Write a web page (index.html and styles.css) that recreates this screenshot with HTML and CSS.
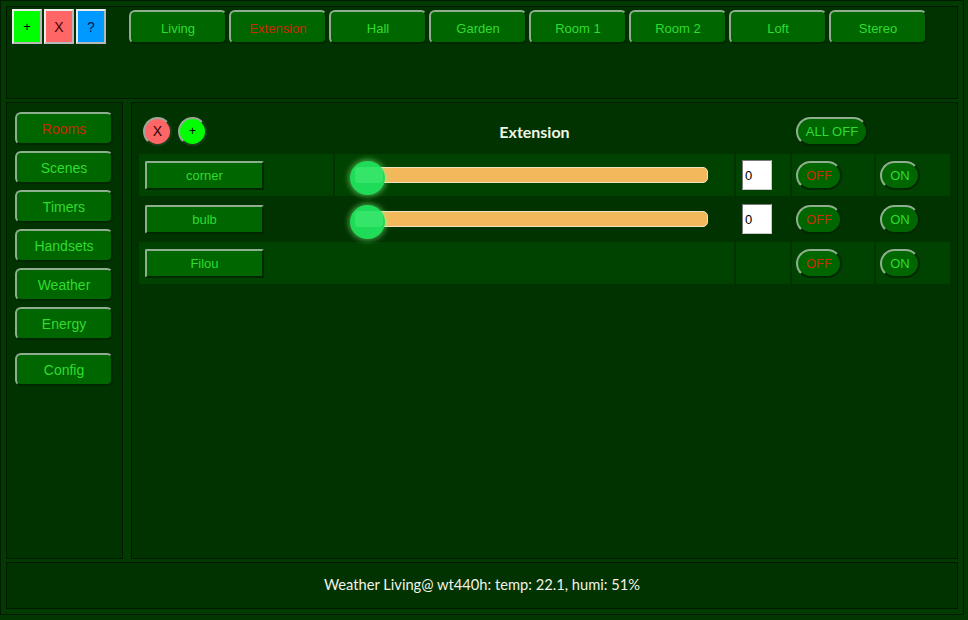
FILE: index.html
```html
<!DOCTYPE html>
<html lang="en">
<head>
<meta charset="utf-8">
<title>Home control</title>
<link rel="stylesheet" href="styles.css">
</head>
<body>
<div class="frame">
  <header class="panel top">
    <div class="tools">
      <button class="sq add">+</button>
      <button class="sq del">X</button>
      <button class="sq help">?</button>
    </div>
    <nav class="tabs">
      <button class="btn tab">Living</button>
      <button class="btn tab active">Extension</button>
      <button class="btn tab">Hall</button>
      <button class="btn tab">Garden</button>
      <button class="btn tab">Room 1</button>
      <button class="btn tab">Room 2</button>
      <button class="btn tab">Loft</button>
      <button class="btn tab">Stereo</button>
    </nav>
  </header>
  <div class="middle">
    <aside class="panel side">
      <button class="btn sbtn active">Rooms</button>
      <button class="btn sbtn">Scenes</button>
      <button class="btn sbtn">Timers</button>
      <button class="btn sbtn">Handsets</button>
      <button class="btn sbtn">Weather</button>
      <button class="btn sbtn">Energy</button>
      <button class="btn sbtn config">Config</button>
    </aside>
    <main class="panel main">
      <div class="rows">
        <div class="row head">
          <div class="cell c1 circles">
            <button class="circ del">X</button>
            <button class="circ add">+</button>
          </div>
          <div class="cell title">Extension</div>
          <div class="cell"></div>
          <div class="cell c4"><button class="btn pill alloff">ALL OFF</button></div>
          <div class="cell"></div>
        </div>
        <div class="row odd">
          <div class="cell c1"><button class="btn name">corner</button></div>
          <div class="cell slider"><div class="track"></div><div class="knob"></div></div>
          <div class="cell c3"><input class="num" type="text" value="0"></div>
          <div class="cell c4"><button class="btn pill off">OFF</button></div>
          <div class="cell c5"><button class="btn pill on">ON</button></div>
        </div>
        <div class="row">
          <div class="cell c1"><button class="btn name">bulb</button></div>
          <div class="cell slider"><div class="track"></div><div class="knob"></div></div>
          <div class="cell c3"><input class="num" type="text" value="0"></div>
          <div class="cell c4"><button class="btn pill off">OFF</button></div>
          <div class="cell c5"><button class="btn pill on">ON</button></div>
        </div>
        <div class="row odd">
          <div class="cell c1 wide"><button class="btn name">Filou</button></div>
          <div class="cell"></div>
          <div class="cell c4"><button class="btn pill off">OFF</button></div>
          <div class="cell c5"><button class="btn pill on">ON</button></div>
        </div>
      </div>
    </main>
  </div>
  <footer class="panel foot">Weather Living@ wt440h: temp: 22.1, humi: 51%</footer>
</div>
</body>
</html>
```
FILE: styles.css
```css
* { box-sizing: border-box; }
html, body { margin: 0; padding: 0; }
body {
  background: #013801;
  width: 968px;
  height: 620px;
  overflow: hidden;
  font-family: "Liberation Sans", Arial, sans-serif;
}
button { font-family: "Liberation Sans", Arial, sans-serif; cursor: pointer; }

.frame {
  width: 964px;
  height: 615px;
  border: 1px solid #001c00;
  background: #023a02;
  padding: 5px;
  display: flex;
  flex-direction: column;
  gap: 3px;
}
.panel {
  border: 1px solid #001a00;
  background: #003300;
}

/* header */
.top {
  height: 93px;
  flex: none;
  padding: 2px 5px;
  display: flex;
  align-items: flex-start;
}
.tools { display: flex; gap: 2px; }
.sq {
  width: 30px;
  height: 35px;
  padding: 0;
  border: 2px solid;
  border-color: #ececec #b8b8b8 #b8b8b8 #ececec;
  font-size: 13px;
  color: #000;
}
.sq.add { background: #00ff00; }
.sq.del { background: #ff6666; color: #4a0000; font-size: 14px; }
.sq.help { background: #0099ff; color: #001850; font-size: 14px; }

.tabs { display: flex; gap: 2px; margin-left: 23px; margin-top: 1px; }

.btn {
  background: #006600;
  color: #2fdc2f;
  border: 2px solid;
  border-color: #8fae8f #012801 #012801 #8fae8f;
  padding: 0;
}
.btn.active { color: #cc2a00; }

.tab {
  width: 98px;
  height: 34px;
  border-radius: 6px;
  font-size: 13px;
  padding-top: 2px;
}

/* middle */
.middle {
  display: flex;
  gap: 8px;
  height: 457px;
  flex: none;
}
.side {
  width: 117px;
  flex: none;
  padding: 9px 0 0 8px;
  display: flex;
  flex-direction: column;
  gap: 6px;
}
.sbtn {
  width: 98px;
  height: 33px;
  border-radius: 6px;
  font-size: 14px;
}
.sbtn.config { margin-top: 7px; }

.main {
  flex: 1;
  padding: 7px;
}
.rows { display: flex; flex-direction: column; gap: 2px; }
.row {
  display: grid;
  grid-template-columns: 194px 399px 54px 82px 74px;
  column-gap: 2px;
  height: 42px;
}
.row.odd .cell { background: #004300; }
.cell {
  display: flex;
  align-items: center;
}
.cell.wide { grid-column: span 2; }
.c1 { padding-left: 6px; }
.c3 { padding-left: 6px; }
.c4 { padding-left: 4px; }
.c5 { padding-left: 4px; }

.circles { padding-left: 4px; gap: 6px; }
.circ {
  width: 29px;
  height: 29px;
  border-radius: 50%;
  padding: 0;
  border: 2px solid;
  border-color: #9aa79a #1d3d1d #1d3d1d #9aa79a;
  font-size: 13px;
  color: #000;
}
.circ.del { background: #ff6666; font-size: 14px; color: #2a0000; }
.circ.add { background: #00ff00; font-size: 12px; }

.title {
  justify-content: center;
  color: #eef5e2;
  font-family: Lato, "DejaVu Sans", sans-serif;
  font-weight: bold;
  font-size: 16px;
}

.name {
  width: 119px;
  height: 29px;
  border-radius: 2px;
  font-size: 13px;
  margin-top: 1px;
}
.pill {
  height: 29px;
  border-radius: 15px;
  font-size: 13px;
}
.alloff { width: 72px; margin-top: 1px; }
.off { width: 46px; color: #cc2a00; margin-top: 1px; }
.on { width: 40px; margin-top: 1px; }

.slider {
  position: relative;
  padding-left: 17px;
}
.track {
  width: 356px;
  height: 16px;
  background: #f4b85c;
  border: 1px solid #eee3c0;
  border-radius: 5px;
}
.knob {
  position: absolute;
  left: 15px;
  top: 7px;
  width: 35px;
  height: 34px;
  border-radius: 50%;
  background: #1fdc58;
  box-shadow: 0 0 5px 2px rgba(130, 255, 130, 0.45);
}
.knob::after {
  content: "";
  position: absolute;
  left: 5px;
  top: 6px;
  width: 28px;
  height: 16px;
  border-radius: 4px;
  background: rgba(120, 255, 160, 0.25);
}

.num {
  width: 30px;
  height: 30px;
  border: 1px solid;
  border-color: #7a7a7a #c8c8c8 #c8c8c8 #7a7a7a;
  background: #fff;
  font-family: "Liberation Sans", Arial, sans-serif;
  font-size: 13px;
  padding: 0 0 0 2px;
  color: #000;
}

/* footer */
.foot {
  height: 47px;
  flex: none;
  display: flex;
  align-items: center;
  justify-content: center;
  color: #f2f2e6;
  font-family: Lato, "DejaVu Sans", sans-serif;
  font-size: 14.7px;
  padding-bottom: 3px;
}
```
